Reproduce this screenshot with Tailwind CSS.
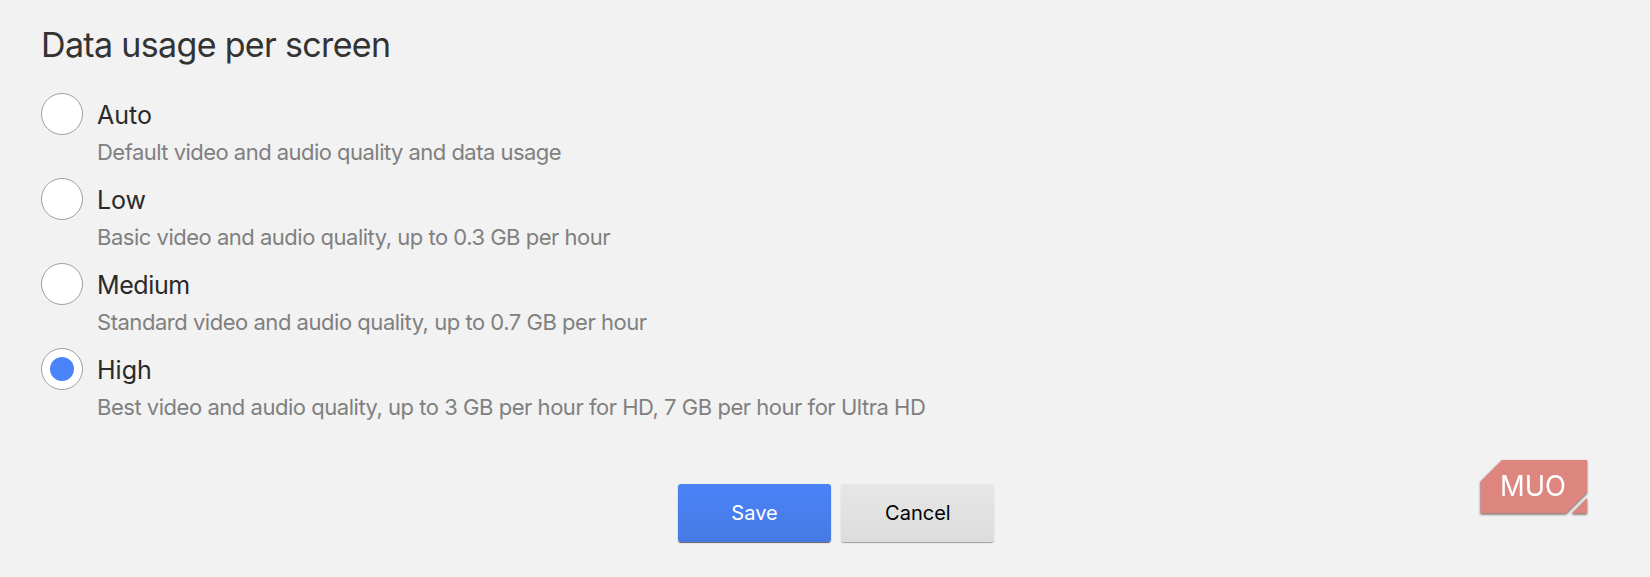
<!DOCTYPE html>
<html lang="en">
<head>
  <meta charset="UTF-8" />
  <title>Playback settings</title>
  <script src="https://cdn.jsdelivr.net/npm/@tailwindcss/browser@4"></script>
</head>
<body class="bg-[#f2f2f2] h-[577px] overflow-hidden font-['Inter',sans-serif]">

  <main class="relative h-full px-[41px] pt-6">

    <h1 class="text-[34px] leading-[42px] tracking-[-0.66px] text-[#333]">Data usage per screen</h1>

    <!-- Quality options -->
    <ul class="mt-[27px]">
      <li class="flex h-[85px] gap-[14px]">
        <span class="size-[42px] shrink-0 rounded-full border-[1.5px] border-[#a0a0a0] bg-white"></span>
        <div>
          <p class="pt-[6px] text-[25px] leading-8 text-[#2a2a2a]">Auto</p>
          <p class="mt-[5px] text-[22px] leading-8 tracking-[-0.53px] text-[#808080]">Default video and audio quality and data usage</p>
        </div>
      </li>
      <li class="flex h-[85px] gap-[14px]">
        <span class="size-[42px] shrink-0 rounded-full border-[1.5px] border-[#a0a0a0] bg-white"></span>
        <div>
          <p class="pt-[6px] text-[25px] leading-8 tracking-[-0.1px] text-[#2a2a2a]">Low</p>
          <p class="mt-[5px] text-[22px] leading-8 tracking-[-0.49px] text-[#808080]">Basic video and audio quality, up to 0.3 GB per hour</p>
        </div>
      </li>
      <li class="flex h-[85px] gap-[14px]">
        <span class="size-[42px] shrink-0 rounded-full border-[1.5px] border-[#a0a0a0] bg-white"></span>
        <div>
          <p class="pt-[6px] text-[25px] leading-8 tracking-[-0.4px] text-[#2a2a2a]">Medium</p>
          <p class="mt-[5px] text-[22px] leading-8 tracking-[-0.47px] text-[#808080]">Standard video and audio quality, up to 0.7 GB per hour</p>
        </div>
      </li>
      <li class="flex h-[85px] gap-[14px]">
        <span class="flex size-[42px] shrink-0 items-center justify-center rounded-full border-[1.5px] border-[#a0a0a0] bg-white">
          <span class="size-6 rounded-full bg-[#4a84f8]"></span>
        </span>
        <div>
          <p class="pt-[6px] text-[25px] leading-8 text-[#2a2a2a]">High</p>
          <p class="mt-[5px] text-[22px] leading-8 tracking-[-0.47px] text-[#808080]">Best video and audio quality, up to 3 GB per hour for HD, 7 GB per hour for Ultra HD</p>
        </div>
      </li>
    </ul>

    <!-- Actions -->
    <div class="mt-[51px] ml-[637px] flex gap-[10.4px]">
      <button class="h-[58px] w-[153px] rounded-[3px] bg-linear-to-b from-[#4a82f7] to-[#477ae4] text-xl text-white shadow-[0_1px_1px_rgba(0,0,0,0.6)]">Save</button>
      <button class="h-[58px] w-[153px] rounded-[3px] bg-linear-to-b from-[#e6e6e6] to-[#dddddd] text-xl text-black shadow-[0_1px_1px_rgba(0,0,0,0.35)]">Cancel</button>
    </div>

    <!-- Watermark -->
    <svg class="absolute top-[457px] left-[1478px] drop-shadow-[0_1px_1px_rgba(0,0,0,0.6)]" width="112" height="60" viewBox="0 0 112 60">
      <path d="M24 3H109V35.500L88 56.500H2.500V24.500Z" fill="#dc867f" />
      <path d="M109 41V56.500H93.500Z" fill="#dc867f" />
      <text x="22" y="39" font-family="Inter, sans-serif" font-size="28" font-weight="400" textLength="66" lengthAdjust="spacingAndGlyphs" fill="#fff">MUO</text>
    </svg>

  </main>

</body>
</html>
